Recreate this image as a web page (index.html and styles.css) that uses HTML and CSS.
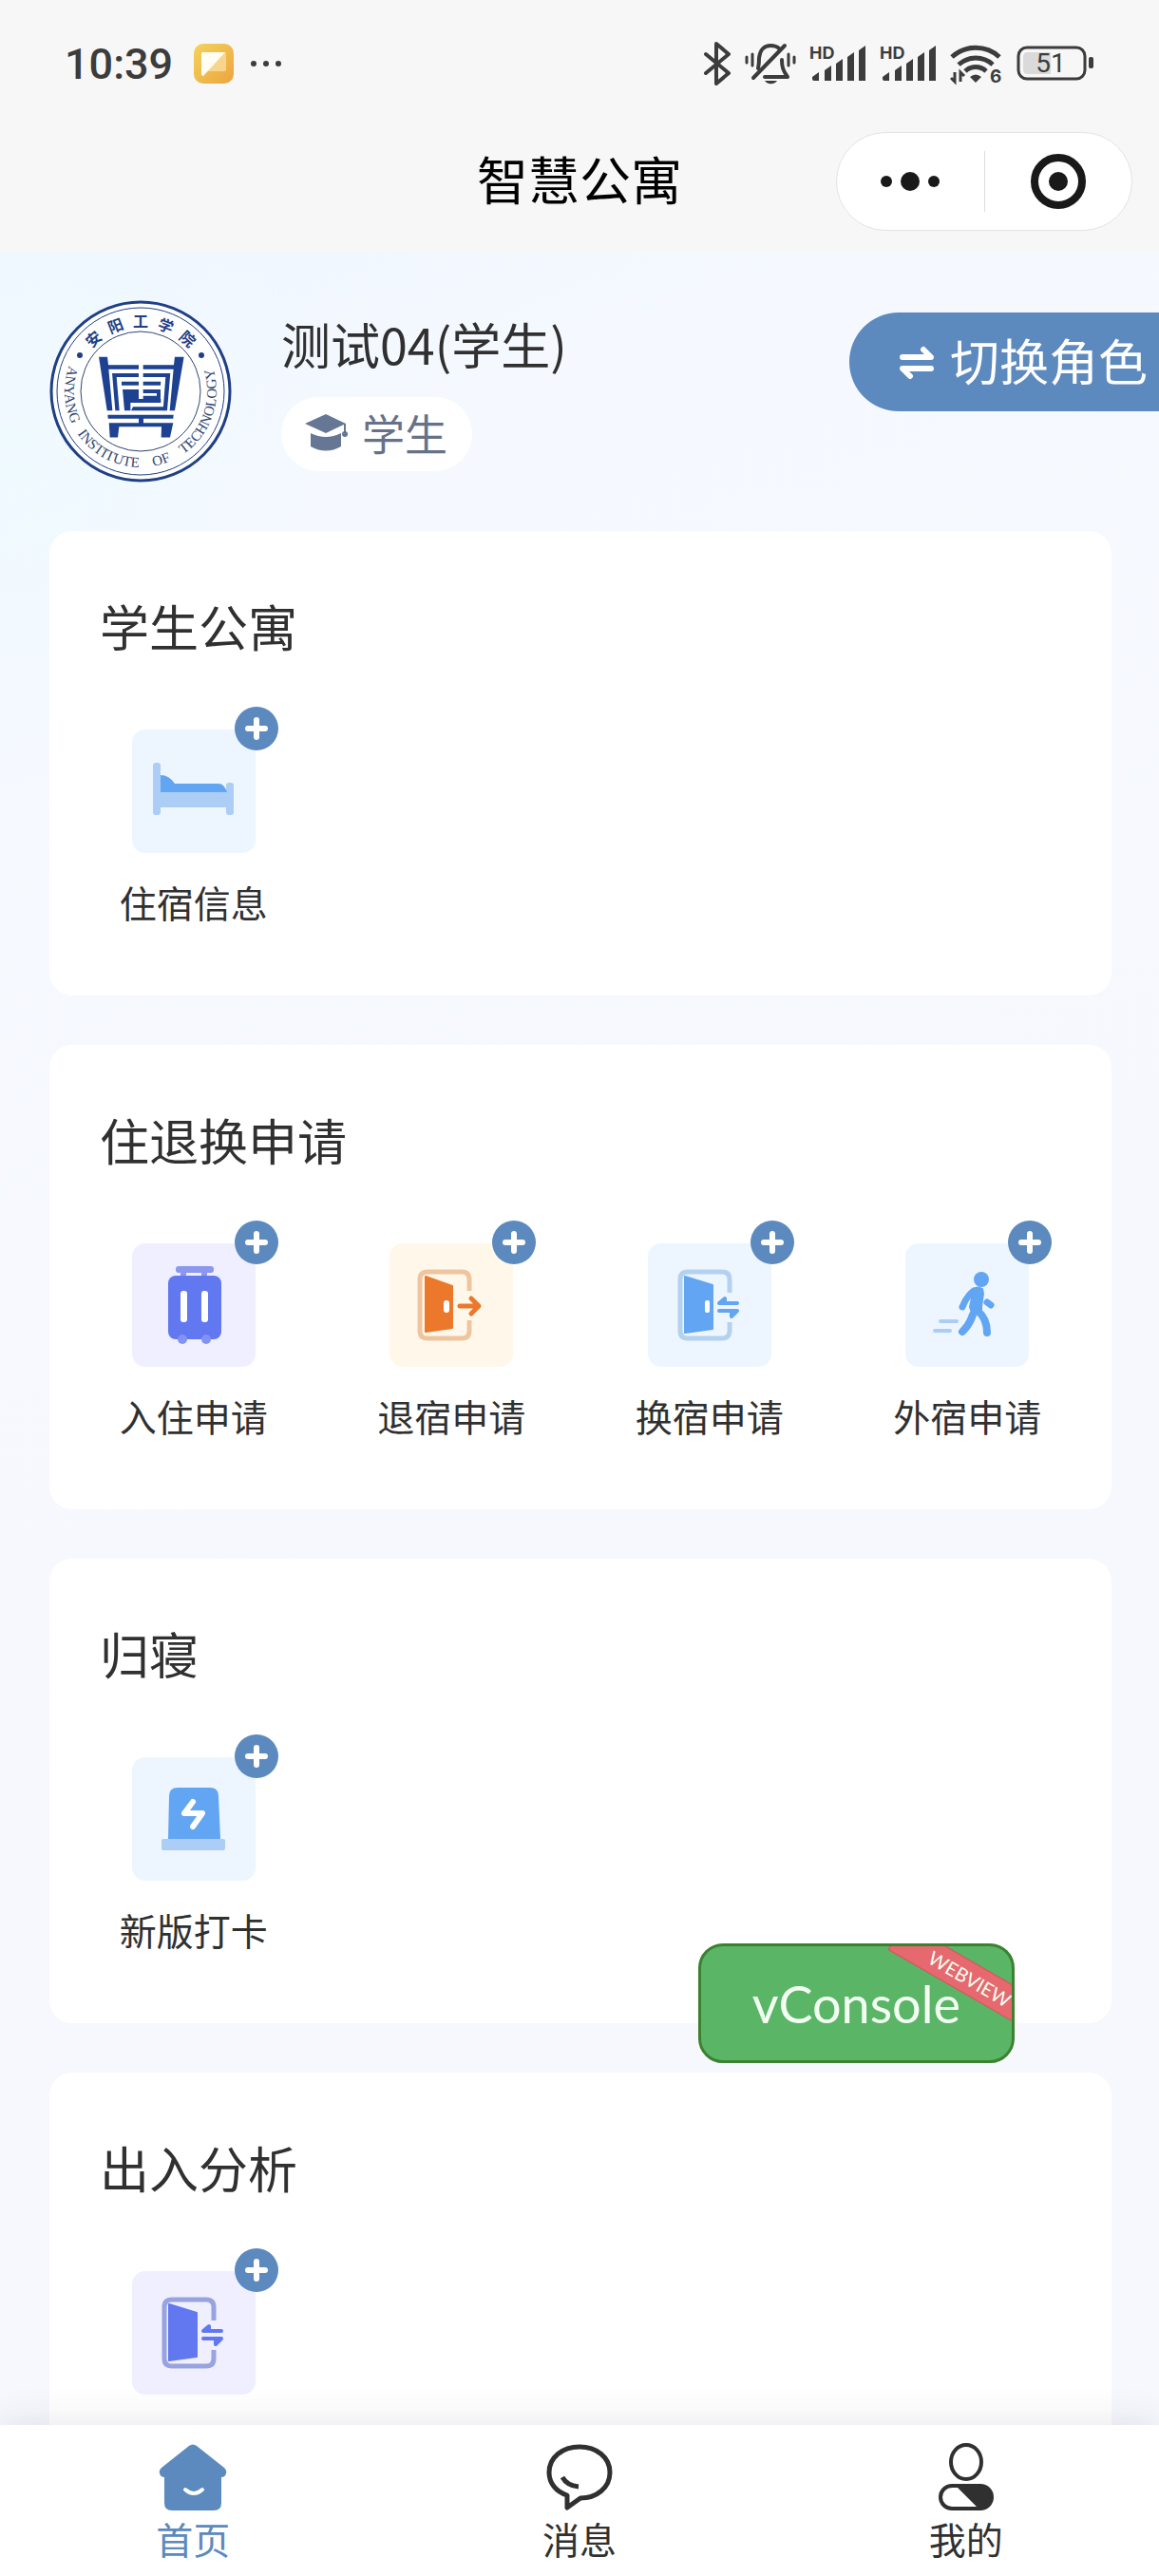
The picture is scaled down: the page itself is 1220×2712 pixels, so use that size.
FILE: index.html
```html
<!DOCTYPE html>
<html lang="zh-CN">

<head>
  <meta charset="UTF-8">
  <meta name="viewport" content="width=device-width, initial-scale=1.0">
  <title>智慧公寓</title>
  <link rel="stylesheet" href="styles.css">
</head>

<body>
  <div class="status-bar">
    <div class="status-left">
      <span class="time">10:39</span>
      <svg class="app-icon" width="42" height="42" viewBox="0 0 42 42">
        <defs>
          <linearGradient id="appBg" x1="0" y1="0" x2="1" y2="1">
            <stop offset="0" stop-color="#f3d35c" />
            <stop offset="1" stop-color="#eda43f" />
          </linearGradient>
        </defs>
        <rect width="42" height="42" rx="10" fill="url(#appBg)" />
        <path d="M14 9h18a2 2 0 0 1 2 2v16a2 2 0 0 1-2 2H14z" fill="#f8d58c" />
        <path d="M11 9h22L10 34a2 2 0 0 1-2-2V11a2 2 0 0 1 3-2z" fill="#fffdf4" />
      </svg>
      <svg width="36" height="42" viewBox="0 0 36 42" fill="#3c3c3c">
        <circle cx="5" cy="21" r="3" />
        <circle cx="18" cy="21" r="3" />
        <circle cx="31" cy="21" r="3" />
      </svg>
    </div>
    <div class="status-right">
      <svg width="30" height="46" viewBox="0 0 30 46" fill="none" stroke="#3c3c3c" stroke-width="4" stroke-linecap="round" stroke-linejoin="round">
        <path d="M3 13l24 20-13 11V2l13 11L3 33" />
      </svg>
      <svg width="54" height="46" viewBox="0 0 54 46" fill="none" stroke="#3c3c3c" stroke-width="4" stroke-linecap="round" stroke-linejoin="round">
        <path d="M14 28c1-4 1-7 1-11C16 8 21 4 27 4c4 0 7 1 9 3" />
        <path d="M39 19c0 7 1 11 6 18H21" />
        <path d="M42 4L9 38" />
        <path d="M8 13v12M46 13v12M2 16v6M52 16v6" stroke-width="3" />
        <path d="M21 41h13a7 5 0 0 1-13 0z" fill="#3c3c3c" stroke="none" />
      </svg>
      <svg width="60" height="52" viewBox="0 -6 60 52" fill="#3c3c3c">
        <text class="hd" x="0" y="15">HD</text>
        <path d="M3 34l7-5v9H5q-2 0-2-2zM16 27l7-5v16h-7zM28 20l7-5v23h-7zM40 13l7-5v30h-7zM52 6l7-5v37h-7z" />
      </svg>
      <svg width="60" height="52" viewBox="0 -6 60 52" fill="#3c3c3c">
        <text class="hd" x="0" y="15">HD</text>
        <path d="M3 34l7-5v9H5q-2 0-2-2zM16 27l7-5v16h-7zM28 20l7-5v23h-7zM40 13l7-5v30h-7zM52 6l7-5v37h-7z" />
      </svg>
      <svg width="56" height="54" viewBox="0 -6 56 54" fill="none" stroke="#3c3c3c" stroke-width="5">
        <path d="M2 14a37 37 0 0 1 50 0M9 22a27 27 0 0 1 36 0M16 29a16 16 0 0 1 22 0" />
        <path d="M21 35q6-5 12 0l-6 6z" fill="#3c3c3c" stroke="none" />
        <path d="M5 30v10l-4-4M11 40V30l4 4" stroke-width="3" />
        <text class="wifi-gen" x="42" y="41">6</text>
      </svg>
      <svg width="82" height="38" viewBox="0 0 82 38">
        <rect x="2" y="2" width="70" height="33" rx="9" fill="none" stroke="#3c3c3c" stroke-width="3" />
        <path d="M12 7h24v23H12q-5 0-5-5V12q0-5 5-5z" fill="#dadada" />
        <rect x="76" y="12" width="5" height="12" rx="2" fill="#3c3c3c" />
        <text class="battery" x="36" y="28" text-anchor="middle">51</text>
      </svg>
    </div>
  </div>

  <header class="nav-bar">
    <h1>智慧公寓</h1>
    <div class="capsule">
      <button type="button" aria-label="更多">
        <svg width="62" height="20" viewBox="0 0 62 20" fill="#191919">
          <circle cx="6" cy="10" r="6" />
          <circle cx="31" cy="10" r="10" />
          <circle cx="56" cy="10" r="6" />
        </svg>
      </button>
      <button type="button" aria-label="关闭">
        <svg width="58" height="58" viewBox="0 0 58 58">
          <circle cx="29" cy="29" r="25" fill="none" stroke="#191919" stroke-width="8" />
          <circle cx="29" cy="29" r="10" fill="#191919" />
        </svg>
      </button>
    </div>
  </header>

  <!-- 公用图标 -->
  <svg class="sprite" aria-hidden="true">
    <symbol id="plus" viewBox="0 0 46 46">
      <circle cx="23" cy="23" r="23" fill="#5c89be" />
      <path d="M23 14v18M14 23h18" stroke="#fff" stroke-width="6" stroke-linecap="round" />
    </symbol>
    <symbol id="swap" viewBox="0 0 130 130">
      <path d="M86 52V38q0-8-8-8H42q-8 0-8 8v54q0 8 8 8h36q8 0 8-8V83" fill="none" stroke-width="5" class="door-frame" />
      <path d="M39 35l29 9v46l-29 4z" class="door-leaf" stroke-width="2" stroke-linejoin="round" />
      <path d="M94 63H75l6-5v5M75 71h19l-6 6v-6" fill="none" stroke-width="4" stroke-linecap="round" stroke-linejoin="round" class="door-arrow" />
    </symbol>
  </svg>

  <main class="content">
    <section class="profile">
      <svg class="seal" width="192" height="192" viewBox="0 0 192 192" role="img" aria-label="安阳工学院">
        <defs>
          <path id="ring" d="M26.7 56A80 80 0 1 0 165.3 56" />
        </defs>
        <circle cx="96" cy="96" r="94" fill="#fff" stroke="#1f3f86" stroke-width="3" />
        <circle cx="96" cy="96" r="88" fill="none" stroke="#1f3f86" stroke-width="1" />
        <circle cx="96" cy="96" r="63" fill="none" stroke="#2f4470" stroke-width="1" />
        <circle cx="32" cy="58" r="3" fill="#1f3f86" />
        <circle cx="160" cy="58" r="3" fill="#1f3f86" />
        <g class="seal-cn" text-anchor="middle">
          <text x="96" y="28" transform="rotate(-42 96 96)">安</text>
          <text x="96" y="28" transform="rotate(-21 96 96)">阳</text>
          <text x="96" y="28">工</text>
          <text x="96" y="28" transform="rotate(21 96 96)">学</text>
          <text x="96" y="28" transform="rotate(42 96 96)">院</text>
        </g>
        <g class="seal-en">
          <text><textPath href="#ring" startOffset="14">ANYANG</textPath></text>
          <text><textPath href="#ring" startOffset="89">INSTITUTE</textPath></text>
          <text><textPath href="#ring" startOffset="181">OF</textPath></text>
          <text><textPath href="#ring" startOffset="215">TECHNOLOGY</textPath></text>
        </g>
        <g transform="translate(96 96) scale(.333) translate(-322 -319)" fill="#1c4291">
          <path d="M190 210h27l3 26h96v13h-95l12 131h-17zM459 210h-29l-3 26h-97v13h96l-12 131h16z" />
          <path d="M232 262h84v12h-70l9 106h-13zM330 262h86l-10 118h-13l8-106h-71z" />
          <path d="M262 288h54v12h-54zM330 288h56l-1 12h-55zM330 313h55v30h-55v-10h43v-8h-43zM265 313h51v30h70v12h-96v25h-19zM298 368h98v12h-104z" />
          <path d="M218 393h208l-1 12h-94v14h94l-10 46h-28l1-34H254l-4 34h-25l-3-46h94v-14h-97z" />
        </g>
      </svg>
      <div class="user">
        <h2>测试04(学生)</h2>
        <span class="role">
          <svg width="47" height="40" viewBox="0 0 47 40" fill="#667695">
            <path d="M23 1L1 11l22 10 21-10z" />
            <path d="M7 21q16 8 32 0v14q-16 9-32 0z" />
            <path d="M43 11v10" stroke="#667695" stroke-width="2" />
            <circle cx="43" cy="22" r="3" />
          </svg>
          学生
        </span>
      </div>
      <button type="button" class="switch-role">
        <svg width="38" height="38" viewBox="0 0 38 38" fill="none" stroke="#fff" stroke-width="6" stroke-linecap="round" stroke-linejoin="round">
          <path d="M4 14h30L26 6M34 26H4l8 8" />
        </svg>
        <span>切换角色</span>
      </button>
    </section>

    <section class="card">
      <h3>学生公寓</h3>
      <div class="apps">
        <a class="app" href="#">
          <span class="tile blue">
            <svg class="icon" viewBox="0 0 130 130">
              <path d="M30 66h70v16H30z" fill="#abcdf6" />
              <rect x="22" y="35" width="8" height="55" rx="3" fill="#abcdf6" />
              <rect x="99" y="56" width="8" height="34" rx="3" fill="#abcdf6" />
              <path d="M30 48q9 0 15 9h46q6 0 9 9H30z" fill="#62a5f2" />
            </svg>
            <svg class="plus"><use href="#plus" /></svg>
          </span>
          住宿信息
        </a>
      </div>
    </section>

    <section class="card">
      <h3>住退换申请</h3>
      <div class="apps">
        <a class="app" href="#">
          <span class="tile purple">
            <svg class="icon" viewBox="0 0 130 130">
              <rect x="46" y="24" width="40" height="7" rx="3" fill="#8b98ee" />
              <path d="M51 30h6v6h-6zM73 30h6v6h-6z" fill="#8b98ee" />
              <rect x="38" y="34" width="56" height="67" rx="8" fill="#6178f0" />
              <rect x="51" y="50" width="7" height="33" rx="3" fill="#fff" />
              <rect x="73" y="50" width="7" height="33" rx="3" fill="#fff" />
              <circle cx="53" cy="101" r="5" fill="#8292f2" />
              <circle cx="78" cy="101" r="5" fill="#8292f2" />
            </svg>
            <svg class="plus"><use href="#plus" /></svg>
          </span>
          入住申请
        </a>
        <a class="app" href="#">
          <span class="tile orange">
            <svg class="icon" viewBox="0 0 130 130">
              <path d="M84 50V38q0-8-8-8H40q-8 0-8 8v54q0 8 8 8h36q8 0 8-8V81" fill="none" stroke="#efc5a0" stroke-width="5" />
              <path d="M38 35l28 10v44l-28 4z" fill="#ec782c" stroke="#ec782c" stroke-width="2" stroke-linejoin="round" />
              <rect x="57" y="60" width="6" height="13" rx="3" fill="#fff" />
              <path d="M74 66h19M86 58l8 8-8 8" fill="none" stroke="#ec782c" stroke-width="5" stroke-linecap="round" stroke-linejoin="round" />
            </svg>
            <svg class="plus"><use href="#plus" /></svg>
          </span>
          退宿申请
        </a>
        <a class="app" href="#">
          <span class="tile blue">
            <svg class="icon" viewBox="0 0 130 130">
              <use href="#swap" />
              <rect x="60" y="60" width="5" height="13" rx="2" fill="#fff" />
            </svg>
            <svg class="plus"><use href="#plus" /></svg>
          </span>
          换宿申请
        </a>
        <a class="app" href="#">
          <span class="tile blue">
            <svg class="icon" viewBox="0 0 130 130" fill="none" stroke="#62a5f2" stroke-linecap="round" stroke-linejoin="round">
              <circle cx="80" cy="38" r="8" fill="#62a5f2" stroke="none" />
              <path d="M72 50q-8 6-12 17" stroke-width="7" />
              <path d="M72 48q4-3 9 0l1 5-2 13v7h-10l-2-6z" fill="#62a5f2" stroke-width="2" />
              <path d="M86 62l4 3" stroke-width="7" />
              <path d="M71 75q-3 10-11 18M76 71q10 8 10 23" stroke-width="8" />
              <path d="M37 82h17M31 92h16" stroke="#abcdf6" stroke-width="4" />
            </svg>
            <svg class="plus"><use href="#plus" /></svg>
          </span>
          外宿申请
        </a>
      </div>
    </section>

    <section class="card">
      <h3>归寝</h3>
      <div class="apps">
        <a class="app" href="#">
          <span class="tile blue">
            <svg class="icon" viewBox="0 0 130 130">
              <path d="M38 86l1-45q0-9 9-9h34q9 0 9 9l2 45z" fill="#62a5f2" />
              <rect x="31" y="86" width="67" height="12" rx="2" fill="#abcdf6" />
              <path d="M64 47l-9 12h19l-10 14" fill="none" stroke="#fff" stroke-width="6" stroke-linecap="round" stroke-linejoin="round" />
            </svg>
            <svg class="plus"><use href="#plus" /></svg>
          </span>
          新版打卡
        </a>
      </div>
    </section>

    <section class="card">
      <h3>出入分析</h3>
      <div class="apps">
        <a class="app" href="#" aria-label="出入分析">
          <span class="tile purple">
            <svg class="icon" viewBox="0 0 130 130"><use href="#swap" /></svg>
            <svg class="plus"><use href="#plus" /></svg>
          </span>
        </a>
      </div>
    </section>
  </main>

  <nav class="tab-bar">
    <a class="tab active" href="#">
      <svg width="72" height="72" viewBox="0 0 72 72">
        <path d="M32 3q4-3 8 0l29 23q3 3 2 6-1 4-5 4v27q0 8-8 8H14q-8 0-8-8V36q-4 0-5-4-1-3 2-6z" fill="#5c89be" />
        <path d="M28 49q9 8 18 0" fill="none" stroke="#fff" stroke-width="4" stroke-linecap="round" />
      </svg>
      首页
    </a>
    <a class="tab" href="#">
      <svg width="72" height="72" viewBox="0 0 72 72" fill="none" stroke="#303030" stroke-width="5" stroke-linejoin="round">
        <path d="M36 4c18 0 32 11 32 27S54 58 37 58L23 68V55C11 51 4 42 4 31 4 15 18 4 36 4z" />
        <path d="M18 36q5 9 17 10" />
      </svg>
      消息
    </a>
    <a class="tab" href="#">
      <svg width="72" height="72" viewBox="0 0 72 72">
        <ellipse cx="36" cy="20" rx="16" ry="18" fill="none" stroke="#303030" stroke-width="4" />
        <rect x="9" y="45" width="54" height="24" rx="12" fill="none" stroke="#303030" stroke-width="4" />
        <path d="M25 45h26a12 12 0 0 1 0 24h-2z" fill="#303030" />
      </svg>
      我的
    </a>
  </nav>

  <button type="button" class="vconsole">vConsole<span class="ribbon">WEBVIEW</span></button>
</body>

</html>
```
FILE: styles.css
```css
* {
  box-sizing: border-box;
}

body {
  margin: 0;
  height: 100vh;
  display: flex;
  flex-direction: column;
  font-family: "Noto Sans CJK SC", sans-serif;
  font-size: 39px;
  color: #303030;
  background-color: #f7f8fd;
}

h1,
h2,
h3 {
  margin: 0;
  font-weight: 400;
}

a {
  color: inherit;
  text-decoration: none;
}

button {
  padding: 0;
  border: none;
  background: none;
  font-family: inherit;
  cursor: pointer;
}

svg {
  display: block;
  flex: none;
}

.sprite {
  position: absolute;
  width: 0;
  height: 0;
}

/* 状态栏 */
.status-bar {
  flex: none;
  height: 134px;
  padding: 0 68px;
  display: flex;
  justify-content: space-between;
  align-items: center;
  background-color: #f7f7f7;
  color: #3c3c3c;
}

.status-left,
.status-right {
  display: flex;
  align-items: center;
}

.time {
  font-family: Roboto, sans-serif;
  font-size: 45px;
  font-weight: 500;
}

.app-icon {
  margin: 0 16px 0 22px;
}

.status-right {
  gap: 14px;
}

.hd {
  font: 700 18px Inter, sans-serif;
}

.wifi-gen {
  font: 700 19px Inter, sans-serif;
  fill: #3c3c3c;
  stroke: none;
}

.battery {
  font: 400 28px Roboto, sans-serif;
  fill: #3c3c3c;
}

/* 导航栏 */
.nav-bar {
  flex: none;
  padding: 5px 28px 23px;
  display: grid;
  grid-template-columns: 1fr auto 1fr;
  align-items: center;
  background-color: #f7f7f7;
}

.nav-bar h1 {
  grid-column: 2;
  padding-bottom: 6px;
  font-size: 54px;
  line-height: 80px;
  color: #000;
}

.capsule {
  justify-self: end;
  width: 312px;
  height: 104px;
  display: flex;
  align-items: center;
  border: 1px solid #e3e3e3;
  border-radius: 52px;
  background-color: #fff;
}

.capsule button {
  flex: 1;
  height: 64px;
  display: flex;
  justify-content: center;
  align-items: center;
}

.capsule button + button {
  border-left: 1px solid #dedede;
}

/* 内容 */
.content {
  flex: 1;
  min-height: 0;
  overflow: hidden;
  padding: 50px 0 0 52px;
  background-image:
    radial-gradient(circle at 0 200px, #effaff 0, rgba(239, 250, 255, 0) 360px),
    linear-gradient(160deg, #eff6ff 0, #f5f9ff 12%, #f7f8fd 60%);
}

.profile {
  display: flex;
  align-items: flex-start;
  margin-bottom: 51px;
}

.seal-cn {
  font: 700 16px "Noto Sans CJK SC", sans-serif;
  fill: #1f3f86;
}

.seal-en {
  font: 15px "Liberation Serif", serif;
  fill: #2f4470;
}

.user {
  margin-left: 52px;
  padding-top: 16px;
}

.user h2 {
  font-size: 52px;
  line-height: 60px;
}

.role {
  display: inline-flex;
  align-items: center;
  gap: 14px;
  margin-top: 26px;
  padding: 0 26px 4px 24px;
  height: 78px;
  border-radius: 39px;
  background-color: #fff;
  font-size: 45px;
  color: #667288;
}

.switch-role {
  display: flex;
  align-items: center;
  gap: 16px;
  height: 104px;
  margin: 13px 0 0 auto;
  padding: 0 12px 0 52px;
  border-radius: 52px 0 0 52px;
  background-color: #5c89be;
  font-size: 52px;
  color: #fff;
}

.switch-role span {
  padding-bottom: 6px;
}

.card {
  min-height: 489px;
  margin: 0 50px 52px 0;
  padding: 64px 16px 0;
  border-radius: 24px;
  background-color: #fff;
}

.card h3 {
  padding-left: 37px;
  font-size: 52px;
  line-height: 72px;
}

.apps {
  display: grid;
  grid-template-columns: repeat(4, 1fr);
  margin-top: 73px;
}

.app {
  display: flex;
  flex-direction: column;
  align-items: center;
  line-height: 60px;
}

.tile {
  position: relative;
  width: 130px;
  height: 130px;
  margin-bottom: 21px;
  border-radius: 14px;
}

.blue {
  background-color: #edf6ff;
  --frame: #b4d1f0;
  --leaf: #62a5f2;
}

.purple {
  background-color: #efefff;
  --frame: #98a3e0;
  --leaf: #6178f0;
}

.orange {
  background-color: #fff8ea;
}

.door-frame {
  stroke: var(--frame);
}

.door-leaf {
  fill: var(--leaf);
  stroke: var(--leaf);
}

.door-arrow {
  stroke: var(--leaf);
}

.icon {
  width: 130px;
  height: 130px;
}

.plus {
  position: absolute;
  top: -24px;
  right: -24px;
  width: 46px;
  height: 46px;
}

/* 底部标签 */
.tab-bar {
  flex: none;
  position: relative;
  display: flex;
  padding: 19px 0 12px;
  background-color: #fff;
  box-shadow: 0 0 40px rgba(40, 40, 70, 0.12);
}

.tab {
  flex: 1;
  display: flex;
  flex-direction: column;
  align-items: center;
  line-height: 56px;
}

.tab.active {
  color: #5c89be;
}

.vconsole {
  position: fixed;
  right: 152px;
  bottom: 540px;
  padding: 0 54px;
  height: 126px;
  overflow: hidden;
  border: 3px solid #3b812f;
  border-radius: 26px;
  background-color: #5ab567;
  font-family: Lato, sans-serif;
  font-size: 54px;
  color: #f2fff2;
}

.ribbon {
  position: absolute;
  top: 17px;
  right: -46px;
  width: 180px;
  border: 1px solid #c9585c;
  background-color: #e5696f;
  font-size: 20px;
  line-height: 32px;
  transform: rotate(30deg);
}
```
